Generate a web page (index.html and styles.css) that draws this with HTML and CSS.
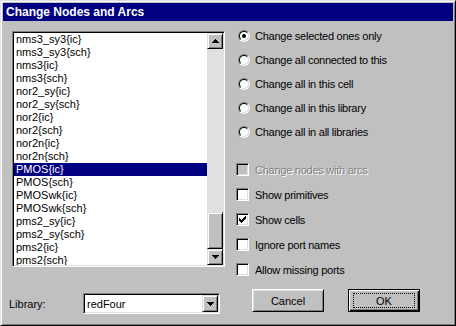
FILE: index.html
```html
<!DOCTYPE html>
<html>
<head>
    <title>Change Nodes and Arcs</title>
    <link rel="stylesheet" href="styles.css">
</head>
<body>
    <div class="window">
        <div class="titlebar">Change Nodes and Arcs</div>
        <div class="content">
            <!-- Cell list and library picker -->
            <div class="left">
                <div class="listbox">
                    <ul class="items">
                        <li>nms3_sy3{ic}</li>
                        <li>nms3_sy3{sch}</li>
                        <li>nms3{ic}</li>
                        <li>nms3{sch}</li>
                        <li>nor2_sy{ic}</li>
                        <li>nor2_sy{sch}</li>
                        <li>nor2{ic}</li>
                        <li>nor2{sch}</li>
                        <li>nor2n{ic}</li>
                        <li>nor2n{sch}</li>
                        <li class="selected">PMOS{ic}</li>
                        <li>PMOS{sch}</li>
                        <li>PMOSwk{ic}</li>
                        <li>PMOSwk{sch}</li>
                        <li>pms2_sy{ic}</li>
                        <li>pms2_sy{sch}</li>
                        <li>pms2{ic}</li>
                        <li>pms2{sch}</li>
                    </ul>
                    <div class="scrollbar">
                        <div class="sb-btn">
                            <svg width="7" height="4" shape-rendering="crispEdges"><path d="M3 0h1v1h1v1h1v1h1v1h-7v-1h1v-1h1v-1h1z"/></svg>
                        </div>
                        <div class="sb-track"></div>
                        <div class="sb-thumb"></div>
                        <div class="sb-btn">
                            <svg width="7" height="4" shape-rendering="crispEdges"><path d="M0 0h7v1h-1v1h-1v1h-1v1h-1v-1h-1v-1h-1v-1h-1z"/></svg>
                        </div>
                    </div>
                </div>
                <div class="library-row">
                    <span class="label">Library:</span>
                    <div class="combo">
                        <span class="combo-text">redFour</span>
                        <div class="combo-btn">
                            <svg width="7" height="4" shape-rendering="crispEdges"><path d="M0 0h7v1h-1v1h-1v1h-1v1h-1v-1h-1v-1h-1v-1h-1z"/></svg>
                        </div>
                    </div>
                </div>
            </div>

            <!-- Options -->
            <div class="right">
                <div class="radio-group">
                    <div class="row"><span class="ind"><span class="radio checked"></span></span>Change selected ones only</div>
                    <div class="row"><span class="ind"><span class="radio"></span></span>Change all connected to this</div>
                    <div class="row"><span class="ind"><span class="radio"></span></span>Change all in this cell</div>
                    <div class="row"><span class="ind"><span class="radio"></span></span>Change all in this library</div>
                    <div class="row"><span class="ind"><span class="radio"></span></span>Change all in all libraries</div>
                </div>
                <div class="check-group">
                    <div class="row disabled"><span class="ind"><span class="check off"></span></span>Change nodes with arcs</div>
                    <div class="row"><span class="ind"><span class="check"></span></span>Show primitives</div>
                    <div class="row"><span class="ind"><span class="check">
                        <svg width="7" height="7" shape-rendering="crispEdges"><path d="M6 0h1v1h-1zM5 1h2v1h-2zM0 2h1v1h-1zM4 2h3v1h-3zM0 3h2v1h-2zM3 3h3v1h-3zM0 4h5v1h-5zM1 5h3v1h-3zM2 6h1v1h-1z"/></svg>
                    </span></span>Show cells</div>
                    <div class="row"><span class="ind"><span class="check"></span></span>Ignore port names</div>
                    <div class="row"><span class="ind"><span class="check"></span></span>Allow missing ports</div>
                </div>
                <div class="buttons">
                    <button class="btn cancel">Cancel</button>
                    <button class="btn default">OK</button>
                </div>
            </div>
        </div>
    </div>
</body>
</html>
```

FILE: styles.css
```css
body {
    margin: 0;
    background: #c0c0c0;
}
.window {
    width: 456px;
    height: 326px;
    box-sizing: border-box;
    background: #c0c0c0;
    border: 1px solid;
    border-color: #dfdfdf #000 #000 #dfdfdf;
    box-shadow: inset 1px 1px #fff, inset -1px -1px #808080;
    padding: 2px;
    font-family: "Liberation Sans", Arial, sans-serif;
    font-size: 11px;
    color: #000;
    overflow: hidden;
}
.titlebar {
    height: 18px;
    line-height: 18px;
    padding-left: 3px;
    background: #000080;
    color: #fff;
    font-weight: bold;
    font-size: 12px;
}
.content {
    display: flex;
    padding-left: 9px;
}
.left {
    width: 213px;
    margin-top: 10px;
}
.listbox {
    height: 236px;
    box-sizing: border-box;
    display: flex;
    background: #fff;
    border: 1px solid;
    border-color: #808080 #fff #fff #808080;
    box-shadow: inset 1px 1px #000, inset -1px -1px #dfdfdf;
    padding: 1px;
}
.items {
    flex: 1;
    list-style: none;
    margin: 0;
    padding: 0;
    overflow: hidden;
}
.items li {
    height: 13px;
    line-height: 13px;
    padding-left: 2px;
    white-space: nowrap;
}
.items li.selected {
    background: #000080;
    color: #fff;
}
.scrollbar {
    width: 16px;
    display: flex;
    flex-direction: column;
    background: #e0e0e0;
}
.sb-btn, .sb-thumb, .combo-btn {
    box-sizing: border-box;
    background: #c0c0c0;
    border: 1px solid;
    border-color: #dfdfdf #000 #000 #dfdfdf;
    box-shadow: inset 1px 1px #fff, inset -1px -1px #808080;
}
.sb-btn {
    height: 16px;
    display: flex;
    align-items: center;
    justify-content: center;
}
.sb-track {
    flex: 1;
}
.sb-thumb {
    height: 37px;
}
.library-row {
    display: flex;
    align-items: center;
    margin-top: 26px;
}
.label {
    width: 74px;
    margin-left: -3px;
}
.combo {
    width: 137px;
    height: 21px;
    box-sizing: border-box;
    display: flex;
    align-items: center;
    background: #fff;
    border: 1px solid;
    border-color: #808080 #fff #fff #808080;
    box-shadow: inset 1px 1px #000, inset -1px -1px #dfdfdf;
    padding: 1px;
}
.combo-text {
    flex: 1;
    padding-left: 2px;
}
.combo-btn {
    width: 16px;
    height: 17px;
    display: flex;
    align-items: center;
    justify-content: center;
}
.right {
    margin-left: 11px;
    margin-top: 3px;
}
.row {
    display: flex;
    align-items: center;
    height: 24px;
    white-space: nowrap;
    letter-spacing: -0.25px;
}
.check-group {
    margin-top: 13px;
}
.check-group .row {
    height: 25px;
}
.ind {
    width: 19px;
    display: flex;
}
.radio {
    position: relative;
    width: 12px;
    height: 12px;
    box-sizing: border-box;
    margin-left: 2px;
    border-radius: 50%;
    border: 1px solid;
    border-color: #808080 #fff #fff #808080;
}
.radio::before {
    content: '';
    position: absolute;
    inset: 0;
    box-sizing: border-box;
    border-radius: 50%;
    border: 1px solid;
    border-color: #000 #dfdfdf #dfdfdf #000;
    background: #fff;
}
.radio.checked::after {
    content: '';
    position: absolute;
    left: 3px;
    top: 3px;
    width: 4px;
    height: 4px;
    border-radius: 50%;
    background: #000;
}
.check {
    width: 13px;
    height: 13px;
    box-sizing: border-box;
    display: flex;
    align-items: center;
    justify-content: center;
    background: #fff;
    border: 1px solid;
    border-color: #808080 #fff #fff #808080;
    box-shadow: inset 1px 1px #000, inset -1px -1px #dfdfdf;
}
.check.off {
    background: #c0c0c0;
}
.disabled {
    color: #808080;
    text-shadow: 1px 1px 0 #fff;
}
.buttons {
    display: flex;
    margin-top: 7px;
}
.btn {
    position: relative;
    width: 72px;
    height: 23px;
    box-sizing: border-box;
    padding: 0;
    font-family: "Liberation Sans", Arial, sans-serif;
    font-size: 11px;
    color: #000;
    background: #c0c0c0;
    border: 1px solid;
    border-color: #fff #000 #000 #fff;
    box-shadow: inset 1px 1px #dfdfdf, inset -1px -1px #808080;
}
.cancel {
    margin-left: 16px;
}
.default {
    margin-left: 24px;
    border-color: #000;
    box-shadow: inset 1px 1px #fff, inset -1px -1px #000, inset -2px -2px #808080;
}
.default::after {
    content: '';
    position: absolute;
    inset: 3px 4px;
    border: 1px dotted #000;
}
```
